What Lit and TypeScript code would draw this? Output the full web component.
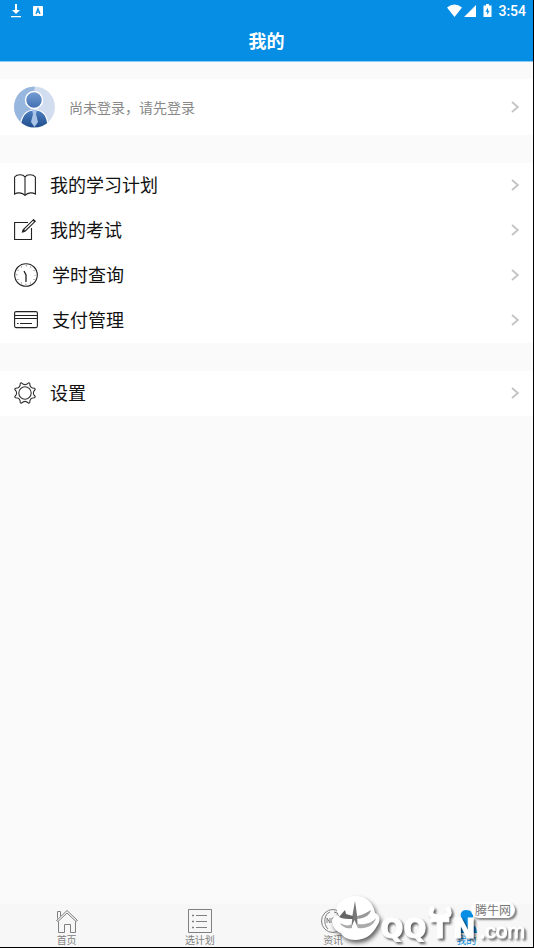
import { LitElement, html, css, nothing } from "lit";
import { customElement, property } from "lit/decorators.js";

const icons: Record<string, unknown> = {
  book: html`<svg width="22" height="24" viewBox="0 0 22 24" fill="none" stroke="#222" stroke-width="1.1">
    <path d="M11 4C9 1 3 1 .6 4V21C3 19.500 8 19 11 22.500C14 19 19 19.500 21.400 21V4C19 1 13 1 11 4V22" />
  </svg>`,
  exam: html`<svg width="22" height="24" viewBox="0 0 22 24" fill="none" stroke="#222" stroke-width="1.1">
    <path d="M14 4.500H.6V21.500H17.500V10" />
    <path d="M8.500 14L9.300 11.500L19.500 1.700L21.200 3.300L11 13.200Z" />
    <path d="M8.500 14L10.500 11.500M19 1.800L21 3.800" stroke-width="1.600" />
  </svg>`,
  clock: html`<svg width="24" height="24" viewBox="0 0 24 24" fill="none" stroke="#222">
    <circle cx="12" cy="12" r="11.300" stroke-width="1.100" />
    <path d="M10 8L12 12V19" stroke-width="1.300" />
    <circle cx="12" cy="12" r="9.200" stroke-width="1" stroke-dasharray="0.800 4.017" stroke-dashoffset="0.400" />
  </svg>`,
  card: html`<svg width="24" height="24" viewBox="0 0 24 24" fill="none" stroke="#222" stroke-width="1.100">
    <rect x=".6" y="3.600" width="22.800" height="16" rx="1.500" />
    <path d="M1 7.500H23M1 10.500H23M3 15.500H4.500M6 15.500H18" />
  </svg>`,
  gear: html`<svg width="22" height="24" viewBox="-11 -12 22 24" fill="none" stroke="#333" stroke-width="1.100">
    <circle r="6.200" />
    <path stroke-linejoin="round" d="M-3.500-10.200Q0-6.500 3.500-10.200L4.700-9.700Q4.600-4.600 9.700-4.700L10.200-3.500Q6.500 0 10.200 3.500L9.700 4.700Q4.600 4.600 4.700 9.700L3.500 10.200Q0 6.500-3.500 10.200L-4.700 9.700Q-4.600 4.600-9.700 4.700L-10.200 3.500Q-6.500 0-10.200-3.500L-9.700-4.700Q-4.600-4.600-4.700-9.700Z" />
  </svg>`,
  home: html`<svg width="24" height="24" viewBox="0 0 24 24" fill="none" stroke="#808080" stroke-width="1">
    <path d="M1.500 11.500L12 1.500L22.500 11.500L21 12.500L12 4L3 12.500Z" />
    <path d="M3.500 12.500V23.500H9.500V15.500H15.500V23.500H20.500V12.500M2.500 9.500V2.500H5.500V7" />
  </svg>`,
  list: html`<svg width="24" height="24" viewBox="0 0 24 24" fill="none" stroke="#808080" stroke-width="1">
    <path d="M.5 .5H23.500V23.500H.5ZM8 6.500H19M8 12.500H19M8 18.500H19" />
    <path d="M4 6.500H6M4 12.500H6M4 18.500H6" stroke-width="1.600" />
  </svg>`,
  news: html`<svg width="24" height="24" viewBox="0 0 24 24" fill="none" stroke="#808080" stroke-width="1">
    <circle cx="12" cy="12" r="11.500" /><path d="M9 3C3 5 2 15 7 20M13 3C20 4 22 15 16 20" />
    <path d="M6 14V9L9 14V9M14 9H11V14H14M11 11.500H14M15 9L16 14L17.500 10L19 14L20 9" />
  </svg>`,
  person: html`<svg width="24" height="24" viewBox="0 0 24 24" fill="#058ee4">
    <path d="M12 1C8 1 6 4 7 8C7.500 11 9 12 9 14C8 16 3 16 2 19L1 24H23L22 19C21 16 17 16 16 14C16 12 18 11 19 8C20 4 17 1 12 1Z" />
  </svg>`,
};

const chevron = html`<svg class="chevron" width="8" height="12" viewBox="0 0 8 12" fill="none" stroke="#c4c4c4" stroke-width="1.800">
  <path d="M1 1L6.800 6L1 11" />
</svg>`;

@customElement("menu-row")
class MenuRow extends LitElement {
  @property() icon = "";
  @property() label = "";

  static styles = css`
    :host { display: block; }
    .row {
      display: flex; align-items: center; gap: 14px; width: 100%; height: 45px;
      padding: 0 14px 2px; border: 0; background: #fff; color: #111; text-align: left;
      font: 18px/24px "Noto Sans CJK SC", sans-serif;
    }
    .label { flex: 1; padding-bottom: 2px; }
    svg { display: block; flex: none; }
  `;

  render() {
    return html`<button class="row">${icons[this.icon]}<span class="label">${this.label}</span>${chevron}</button>`;
  }
}

@customElement("tab-bar")
class TabBar extends LitElement {
  static styles = css`
    :host { display: block; }
    .tabs { display: flex; background: #f7f7f7; }
    .tab {
      flex: 1; display: flex; flex-direction: column; align-items: center; gap: 1px;
      padding: 5px 0 0; height: 43px; box-sizing: border-box; border: 0; background: none;
      color: #808080; font: 10px/12px "Noto Sans CJK SC", sans-serif;
    }
    .active { color: #058ee4; }
    svg { display: block; flex: none; }
  `;

  render() {
    const tabs = [["home", "首页"], ["list", "选计划"], ["news", "资讯"], ["person", "我的"]];
    return html`<nav class="tabs">
      ${tabs.map(([icon, label]) => html`<button
        class=${icon === "person" ? "tab active" : "tab"}
        aria-current=${icon === "person" ? "page" : nothing}
      >${icons[icon]}<span>${label}</span></button>`)}
    </nav>`;
  }
}

@customElement("site-mark")
class SiteMark extends LitElement {
  static styles = css`
    :host { display: block; }
    .mark { display: flex; align-items: flex-end; color: #fff; }
    .leaf { display: block; filter: drop-shadow(2px 3px 2px #0009); }
    .word {
      display: flex; align-items: baseline; gap: 4px; height: 32px;
      font: bold 27px/32px "DejaVu Sans", sans-serif;
      -webkit-text-stroke: 1px #fff;
      filter: drop-shadow(2px 2px 1px #0009);
    }
    .com { font: 21px/32px "Liberation Sans", sans-serif; }
    .horned { position: relative; }
    .horns { position: absolute; left: -3px; top: -8px; }
    .tag {
      position: absolute; right: 10px; top: 7px; padding: 0 4px; border-radius: 8px;
      background: #fff; color: #777; font: 12px/16px "Noto Sans CJK SC", sans-serif;
      box-shadow: 2px 2px 2px #0007;
    }
  `;

  render() {
    return html`<div class="mark">
      <svg class="leaf" width="50" height="50" viewBox="0 0 50 50">
        <path fill="#fff" d="M5 13C10 4 17 1 24 1C35 1 42 7 44 18C49 20 50 25 46 31C41 40 34 45 24 45C17 45 12 42 10 38C6 37 2 33 1 27C1 22 4 21 8 21Z" />
        <path fill="#777" d="M24 6L21.500 20L20 37H27L26 20Z" />
        <path fill="#fff" d="M23.500 25L18 38L24 42L29 38Z" />
        <path fill="#666" d="M8 22L14 15L15 19L22 21V24C17 24 12 24 8 22Z" />
        <path fill="#999" d="M26 21C32 20 36 17 40 15C39 19 36 23 26 24Z" />
        <path fill="#aaa" d="M9 28C14 31 18 31 21 29V33C16 34 11 32 9 28ZM27 29C34 30 41 28 45 23C43 31 35 34 27 33Z" />
      </svg>
      <span class="word">
        <span>QQ</span>
        <span class="horned">T<svg class="horns" width="26" height="15" viewBox="0 0 26 15">
          <path fill="none" stroke="#fff" stroke-width="5" stroke-linecap="round" d="M5 4C1 11 8 12 13 12S25 11 21 4" />
        </svg></span>
        <span>N</span>
        <span class="com">.com</span>
      </span>
      <span class="tag">腾牛网</span>
    </div>`;
  }
}

@customElement("app-root")
class AppRoot extends LitElement {
  static styles = css`
    :host {
      position: relative; display: flex; flex-direction: column; box-sizing: border-box;
      min-height: 100vh; background: #fafafa; border: solid #000; border-width: 0 1px 1px 0;
      font-family: "Noto Sans CJK SC", sans-serif; overflow: hidden;
    }
    svg { display: block; flex: none; }
    .header { background: #058ee4; color: #fff; border-bottom: 1px solid #8accf3; }
    .status { display: flex; align-items: center; height: 22px; padding: 0 7px 0 11px; }
    .notices { display: flex; align-items: center; gap: 12px; flex: 1; }
    .signals { display: flex; align-items: center; }
    .battery { margin: 0 6px; }
    .time { font: 500 14px/22px Roboto, sans-serif; }
    .title { margin: 0; padding-bottom: 2px; font-size: 18px; line-height: 37px; font-weight: 700; text-align: center; }
    .content { flex: 1; display: flex; flex-direction: column; gap: 28px; padding-top: 17px; }
    .login {
      display: flex; align-items: center; gap: 14px; width: 100%; height: 56px; padding: 0 14px;
      border: 0; background: #fff; color: #888; text-align: left;
      font: 14px/20px "Noto Sans CJK SC", sans-serif;
    }
    .prompt { flex: 1; }
    .mark { position: absolute; right: 8px; bottom: 2px; pointer-events: none; }
  `;

  render() {
    return html`
      <header class="header">
        <div class="status">
          <div class="notices">
            <svg width="10" height="14" viewBox="0 0 10 14" fill="#fff"><path d="M4 0H6V6H9L5 10L1 6H4ZM0 12H10V13.300H0Z" /></svg>
            <svg width="10" height="10" viewBox="0 0 10 10"><rect width="10" height="10" rx="1" fill="#fff" /><path d="M3 8L5 2.500L7 8M3.800 6.200H6.200" fill="none" stroke="#058ee4" stroke-width="1.200" /></svg>
          </div>
          <div class="signals">
            <svg width="30" height="14" viewBox="0 0 30 14" fill="#fff"><path d="M0 3.500Q7.500-2.500 15 3.500L7.500 13ZM29 1V13H17Z" /></svg>
            <svg class="battery" width="9" height="14" viewBox="0 0 9 14"><path d="M3 0H6V1.500H8.500V13H.5V1.500H3Z" fill="#fff" /><path d="M5 3.500L2.500 7.800H4.200V11L6.600 6.800H5Z" fill="#058ee4" /></svg>
            <span class="time">3:54</span>
          </div>
        </div>
        <h1 class="title">我的</h1>
      </header>
      <main class="content">
        <button class="login">
          <svg width="41" height="42" viewBox="0 0 41 42">
            <defs>
              <clipPath id="disc"><circle cx="20.500" cy="21" r="20.500" /></clipPath>
              <linearGradient id="suit" x2="0" y2="1"><stop stop-color="#4d7fc0" /><stop offset="1" stop-color="#1f4c8c" /></linearGradient>
              <linearGradient id="face" x2="0" y2="1"><stop stop-color="#779fd5" /><stop offset="1" stop-color="#426eb0" /></linearGradient>
            </defs>
            <g clip-path="url(#disc)">
              <path d="M0 0H41V42H0Z" fill="#d2deef" /><path d="M0 0H20.500V42H0Z" fill="#98b7df" />
              <path d="M6 42C7 29 12 24 20.500 24S34 29 34 42Z" fill="url(#suit)" stroke="#fff" stroke-width="1.200" />
              <circle cx="20" cy="14" r="8.500" fill="url(#face)" stroke="#fff" stroke-width="1.500" />
              <path d="M18 24H23L22 28L24 36L20.500 41L17 36L19 28Z" fill="#a9c4e7" />
            </g>
          </svg>
          <span class="prompt">尚未登录，请先登录</span>
          ${chevron}
        </button>
        <section>
          <menu-row icon="book" label="我的学习计划"></menu-row>
          <menu-row icon="exam" label="我的考试"></menu-row>
          <menu-row icon="clock" label="学时查询"></menu-row>
          <menu-row icon="card" label="支付管理"></menu-row>
        </section>
        <section>
          <menu-row icon="gear" label="设置"></menu-row>
        </section>
      </main>
      <tab-bar></tab-bar>
      <site-mark class="mark"></site-mark>
    `;
  }
}
